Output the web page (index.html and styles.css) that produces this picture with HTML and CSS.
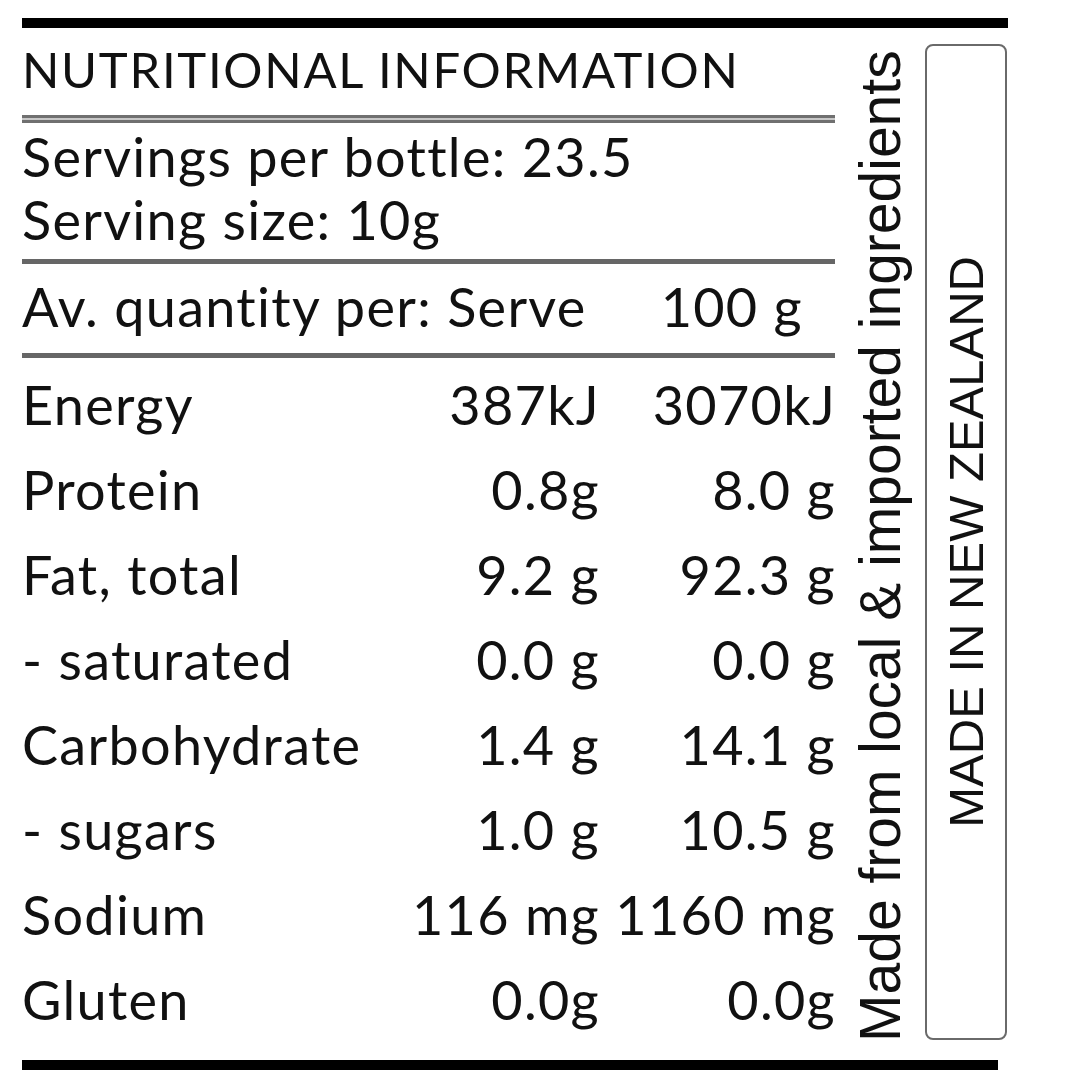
FILE: index.html
```html
<!DOCTYPE html>
<html lang="en">
<head>
    <meta charset="UTF-8">
    <meta name="viewport" content="width=device-width, initial-scale=1.0">
    <title>Nutritional Information</title>
    <link rel="stylesheet" href="styles.css">
</head>
<body>
    <div class="label">
        <div class="rule-top"></div>

        <div class="label-body">
            <div class="panel">
                <h1 class="panel-title">NUTRITIONAL INFORMATION</h1>
                <div class="rule-double"></div>

                <!-- Serving info -->
                <div class="serving-info">
                    <div>Servings per bottle: 23.5</div>
                    <div>Serving size: 10g</div>
                </div>
                <div class="rule"></div>

                <div class="nutrient-row nutrient-head">
                    <span>Av. quantity per: Serve</span>
                    <span class="per-100">100 g</span>
                </div>
                <div class="rule"></div>

                <!-- Nutrients -->
                <div class="nutrient-table">
                    <div class="nutrient-row">
                        <span>Energy</span>
                        <span class="qty">387kJ</span>
                        <span class="qty">3070kJ</span>
                    </div>
                    <div class="nutrient-row">
                        <span>Protein</span>
                        <span class="qty">0.8g</span>
                        <span class="qty">8.0 g</span>
                    </div>
                    <div class="nutrient-row">
                        <span>Fat, total</span>
                        <span class="qty">9.2 g</span>
                        <span class="qty">92.3 g</span>
                    </div>
                    <div class="nutrient-row">
                        <span>- saturated</span>
                        <span class="qty">0.0 g</span>
                        <span class="qty">0.0 g</span>
                    </div>
                    <div class="nutrient-row">
                        <span>Carbohydrate</span>
                        <span class="qty">1.4 g</span>
                        <span class="qty">14.1 g</span>
                    </div>
                    <div class="nutrient-row">
                        <span>- sugars</span>
                        <span class="qty">1.0 g</span>
                        <span class="qty">10.5 g</span>
                    </div>
                    <div class="nutrient-row">
                        <span>Sodium</span>
                        <span class="qty">116 mg</span>
                        <span class="qty">1160 mg</span>
                    </div>
                    <div class="nutrient-row">
                        <span>Gluten</span>
                        <span class="qty">0.0g</span>
                        <span class="qty">0.0g</span>
                    </div>
                </div>
            </div>

            <div class="origin-note">Made from local &amp; imported ingredients</div>

            <div class="origin-box">
                <span>MADE IN NEW ZEALAND</span>
            </div>
        </div>

        <div class="rule-bottom"></div>
    </div>
</body>
</html>
```

FILE: styles.css
```css
body {
    background-color: #ffffff;
    color: #111111;
    font-family: Lato, "Noto Sans", sans-serif;
    font-variant-ligatures: none;
    margin: 0;
    padding: 0;
}

.label {
    padding-left: 22px;
}

.rule-top {
    width: 986px;
    height: 10px;
    margin-top: 18px;
    background-color: #000000;
}

.rule-bottom {
    width: 976px;
    height: 10px;
    margin-top: 18px;
    background-color: #000000;
}

.label-body {
    display: flex;
    align-items: stretch;
}

.panel {
    width: 813px;
}

.panel-title {
    margin: 11px 0 16px 0;
    font-size: 49px;
    font-weight: 400;
    line-height: 60px;
    letter-spacing: 1.7px;
}

.rule-double {
    height: 2px;
    border-top: 3px solid #707070;
    border-bottom: 3px solid #707070;
    background-color: #c8c8c8;
}

.serving-info {
    margin: 2px 0 8px 0;
    font-size: 54px;
    line-height: 63px;
    letter-spacing: 1.3px;
}

.rule {
    height: 5px;
    background-color: #666666;
}

.nutrient-row {
    display: grid;
    grid-template-columns: 376px 202px 236px;
    font-size: 54px;
    line-height: 85px;
    letter-spacing: 1.3px;
    white-space: nowrap;
}

.nutrient-head {
    display: flex;
    justify-content: space-between;
    margin-bottom: 4px;
}

.per-100 {
    padding-right: 32px;
}

.nutrient-table {
    margin-top: 4px;
}

.qty {
    text-align: right;
}

.origin-note {
    margin-left: 14px;
    writing-mode: vertical-rl;
    transform: rotate(180deg);
    font-family: "Liberation Sans", Arial, sans-serif;
    font-size: 57px;
    line-height: 62px;
    white-space: nowrap;
}

.origin-box {
    width: 78px;
    margin: 16px 0 2px 14px;
    border: 2px solid #6a6a6a;
    border-radius: 8px;
    display: flex;
    align-items: center;
    justify-content: center;
}

.origin-box span {
    writing-mode: vertical-rl;
    transform: rotate(180deg);
    font-family: "Liberation Sans", Arial, sans-serif;
    font-size: 49px;
    white-space: nowrap;
}
```
